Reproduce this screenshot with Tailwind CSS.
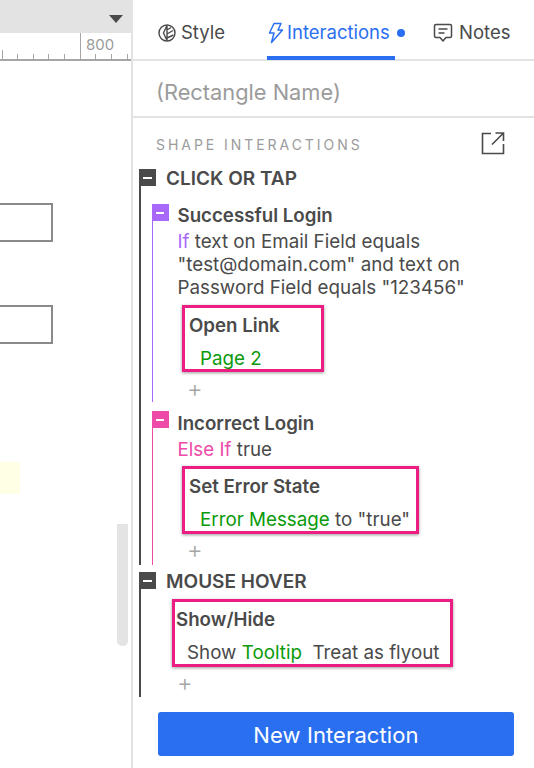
<!DOCTYPE html>
<html lang="en">
<head>
    <meta charset="UTF-8">
    <title>Shape Interactions</title>
    <script src="https://cdn.jsdelivr.net/npm/@tailwindcss/browser@4"></script>
</head>
<body class="bg-white overflow-hidden">
    <div class="flex w-[534px] h-[768px] font-['Inter',sans-serif] text-[#4a4a4a]">

        <!-- Canvas -->
        <div class="relative w-[131px] shrink-0 h-full bg-white overflow-hidden">
            <div class="h-[33px] bg-[#e3e3e3] flex justify-end items-center pr-[8px]">
                <svg width="14" height="8" class="mt-[5px]"><polygon points="0,0 14,0 7,8" fill="#4a4a4a"/></svg>
            </div>
            <div class="relative h-[28px] border-b-2 border-[#a6a6a6]">
                <span class="absolute left-[86px] top-[1px] text-[15px] leading-[22px] text-[#9a9a9a]">800</span>
                <div class="absolute left-[80px] top-0 bottom-0 w-px bg-[#a6a6a6]"></div>
                <div class="absolute left-[2px] bottom-0 h-[9px] w-px bg-[#a6a6a6]"></div>
                <div class="absolute left-[17px] bottom-0 h-[5px] w-px bg-[#a6a6a6]"></div>
                <div class="absolute left-[33px] bottom-0 h-[5px] w-px bg-[#a6a6a6]"></div>
                <div class="absolute left-[48px] bottom-0 h-[5px] w-px bg-[#a6a6a6]"></div>
                <div class="absolute left-[64px] bottom-0 h-[5px] w-px bg-[#a6a6a6]"></div>
                <div class="absolute left-[95px] bottom-0 h-[5px] w-px bg-[#a6a6a6]"></div>
                <div class="absolute left-[111px] bottom-0 h-[5px] w-px bg-[#a6a6a6]"></div>
                <div class="absolute left-[127px] bottom-0 h-[5px] w-px bg-[#a6a6a6]"></div>
            </div>
            <div class="absolute -left-[10px] top-[203px] w-[63px] h-[39px] border-2 border-[#8a8a8a] bg-white"></div>
            <div class="absolute -left-[10px] top-[305px] w-[63px] h-[39px] border-2 border-[#8a8a8a] bg-white"></div>
            <div class="absolute left-0 top-[462px] w-[20px] h-[32px] bg-[#ffffe6]"></div>
            <div class="absolute left-[117px] top-[524px] w-[11px] h-[122px] bg-[#e4e4e4] rounded-b-[5px]"></div>
        </div>

        <!-- Panel -->
        <div class="flex-1 border-l-2 border-[#e3e3e3] h-full min-w-0 flex flex-col">
            <div class="flex h-[61px] border-b-2 border-[#e3e3e3] text-[18.5px] pt-[7px]">
                <div class="flex items-center gap-[4px] pl-[24px] h-full w-[134px]">
                    <svg width="20" height="20" viewBox="0 0 20 20" fill="none" stroke="#4a4a4a" stroke-width="1.4">
                        <circle cx="10" cy="10" r="8"/>
                        <path d="M10 2.5 L6.5 10 L10 17.5 M10 2.5 V17.5 M10 7 L14 4.5 M10 11 L16 7.5 M10 15 L16.5 12"/>
                    </svg>
                    <span>Style</span>
                </div>
                <div class="relative flex items-center gap-[3px] h-full w-[166px] text-[#2a6ff0]">
                    <svg width="17" height="22" viewBox="0 0 17 22" fill="none" stroke="#2a6ff0" stroke-width="1.5" stroke-linejoin="round">
                        <path d="M7 1.5 H14 L11 8 H15.5 L4.5 20.5 L7 11 H2.5 Z"/>
                    </svg>
                    <span>Interactions</span>
                    <span class="ml-[4px] w-[8px] h-[8px] rounded-full bg-[#2a6ff0]"></span>
                    <div class="absolute left-0 bottom-[-1px] w-[128px] h-[4px] bg-[#2a6ff0]"></div>
                </div>
                <div class="flex items-center gap-[6px] h-full">
                    <svg width="20" height="20" viewBox="0 0 20 20" fill="none" stroke="#4a4a4a" stroke-width="1.5" stroke-linejoin="round">
                        <path d="M3 1.5 H17 Q18.5 1.5 18.5 3 V13 Q18.5 14.5 17 14.5 H13 L10 18 L7 14.5 H3 Q1.5 14.5 1.5 13 V3 Q1.5 1.5 3 1.5 Z"/>
                        <path d="M5.5 6 H14.5 M5.5 10 H11.5"/>
                    </svg>
                    <span>Notes</span>
                </div>
            </div>

            <div class="h-[57px] border-b-2 border-[#e3e3e3] flex items-center pl-[23px] pt-[7px] text-[21.8px] text-[#9b9b9b]">(Rectangle Name)</div>

            <div class="flex items-center justify-between h-[51px] pl-[23px] pr-[29px] pt-[1px]">
                <span class="text-[14px] tracking-[2.95px] text-[#9b9b9b]">SHAPE INTERACTIONS</span>
                <svg width="24" height="24" viewBox="0 0 24 24" fill="none" stroke="#4a4a4a" stroke-width="1.6" class="mt-[-2px]">
                    <path d="M10 2.5 H1.5 V22.5 H22.5 V13"/>
                    <path d="M11 13.5 L22 2.5 M14.5 2 H22.5 V10"/>
                </svg>
            </div>

            <!-- Click or tap -->
            <div class="relative ml-[6px] border-l-2 border-[#4a4a4a] h-[396px]">
                <div class="flex items-center h-[17px] text-[19px] font-semibold -ml-[2px]">
                    <span class="w-[17px] h-[17px] bg-[#4a4a4a] flex items-center justify-center"><span class="w-[9px] h-[2px] bg-white"></span></span>
                    <span class="ml-[10px] pt-[4px]">CLICK OR TAP</span>
                </div>

                <div class="mt-[18px] ml-[11px] border-l-[1.5px] border-[#a869fb] h-[198px]">
                    <div class="flex items-center h-[17px] -ml-[1.5px]">
                        <span class="w-[17px] h-[17px] bg-[#a869fb] flex items-center justify-center"><span class="w-[8px] h-[2px] bg-white"></span></span>
                        <span class="ml-[9px] pt-[7px] text-[18.7px] font-semibold">Successful Login</span>
                    </div>
                    <div class="ml-[24.5px] mt-[9px] text-[18.8px] leading-[23px] whitespace-nowrap">
                        <p><span class="text-[#a869fb]">If</span> text on Email Field equals<br>"test@domain.com" and text on<br>Password Field equals "123456"</p>
                    </div>
                    <div class="ml-[29px] mt-[6px] w-[142px] h-[67px] border-[3px] border-[#ec1e83] shadow-[0_1px_3px_rgba(0,0,0,0.4)] pl-[4px] pt-[6px] bg-white">
                        <p class="text-[18.7px] font-semibold leading-[23px]">Open Link</p>
                        <p class="text-[18.8px] leading-[23px] text-[#0a9a0a] mt-[10px] ml-[11px]">Page 2</p>
                    </div>
                    <p class="ml-[34px] mt-[5px] text-[24px] leading-[24px] font-light text-[#a6a6a6]">+</p>
                </div>

                <div class="mt-[9px] ml-[11px] border-l-[1.5px] border-[#ee4aa8] h-[154px]">
                    <div class="flex items-center h-[17px] -ml-[1.5px]">
                        <span class="w-[17px] h-[17px] bg-[#ee4aa8] flex items-center justify-center"><span class="w-[8px] h-[2px] bg-white"></span></span>
                        <span class="ml-[9px] pt-[10px] text-[18.7px] font-semibold">Incorrect Login</span>
                    </div>
                    <p class="ml-[24.5px] mt-[10px] text-[18.8px] leading-[23px]"><span class="text-[#ee4aa8]">Else If</span> true</p>
                    <div class="ml-[29px] mt-[5px] w-[237px] h-[68px] border-[3px] border-[#ec1e83] shadow-[0_1px_3px_rgba(0,0,0,0.4)] pl-[4px] pt-[6px] bg-white">
                        <p class="text-[18.7px] font-semibold leading-[23px]">Set Error State</p>
                        <p class="text-[18.8px] leading-[23px] mt-[10px] ml-[11px]"><span class="text-[#0a9a0a]">Error Message</span> to "true"</p>
                    </div>
                    <p class="ml-[34px] mt-[4px] text-[24px] leading-[24px] font-light text-[#a6a6a6]">+</p>
                </div>
            </div>

            <!-- Mouse hover -->
            <div class="relative ml-[6px] mt-[7px] border-l-2 border-[#4a4a4a] h-[125px]">
                <div class="flex items-center h-[17px] text-[19px] font-semibold -ml-[2px]">
                    <span class="w-[17px] h-[17px] bg-[#4a4a4a] flex items-center justify-center"><span class="w-[9px] h-[2px] bg-white"></span></span>
                    <span class="ml-[10px] pt-[4px]">MOUSE HOVER</span>
                </div>
                <div class="ml-[31px] mt-[10px] w-[281px] h-[68px] border-[3px] border-[#ec1e83] shadow-[0_1px_3px_rgba(0,0,0,0.4)] pl-[1px] pt-[6px] bg-white">
                    <p class="text-[18.7px] font-semibold leading-[23px]">Show/Hide</p>
                    <p class="text-[18.8px] leading-[23px] mt-[10px] ml-[11px] whitespace-nowrap">Show <span class="text-[#0a9a0a]">Tooltip</span>&nbsp; Treat as flyout</p>
                </div>
                <p class="ml-[36px] mt-[4px] text-[24px] leading-[24px] font-light text-[#a6a6a6]">+</p>
            </div>

            <button class="ml-[25px] mt-[15px] w-[356px] h-[44px] rounded-[3px] bg-[#2a6ff0] text-white text-[22px] tracking-[0.1px] pt-[3px]">New Interaction</button>
        </div>
    </div>
</body>
</html>
